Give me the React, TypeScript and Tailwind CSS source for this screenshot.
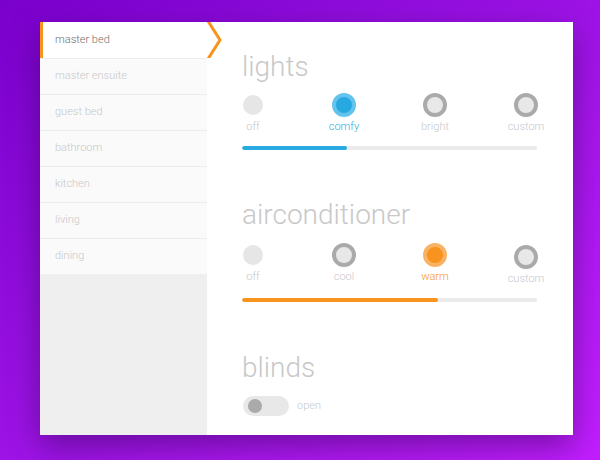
import React from 'react';

const rooms = ['master bed', 'master ensuite', 'guest bed', 'bathroom', 'kitchen', 'living', 'dining'];

type Opt = { label: string; state: 'off' | 'idle' | 'on'; drop?: boolean };

const Dot = ({ state, tone }: { state: Opt['state']; tone: 'blue' | 'orange' }) => {
  if (state === 'off') return <div className="w-5 h-5 rounded-full bg-[#e6e6e6]" />;
  if (state === 'idle')
    return <div className="w-6 h-6 rounded-full border-4 border-[#aaaaaa] bg-[#e8e8e8]" />;
  return (
    <div
      className={
        tone === 'blue'
          ? 'w-6 h-6 rounded-full border-4 border-[#63c3ec] bg-[#27a8e0]'
          : 'w-6 h-6 rounded-full border-4 border-[#f9b264] bg-[#f7931e]'
      }
    />
  );
};

const Section = ({
  title,
  options,
  tone,
  fill,
  gap,
}: {
  title: string;
  options: Opt[];
  tone: 'blue' | 'orange';
  fill: number;
  gap: string;
}) => (
  <div>
    <h2 className="text-[28px] leading-8 font-light text-[#c8c8c8]">{title}</h2>
    <div className={'flex justify-between ' + gap}>
      {options.map((o) => (
        <div key={o.label} className={o.drop ? 'w-[22px] flex flex-col items-center mt-[2px]' : 'w-[22px] flex flex-col items-center'}>
          <div className="h-6 flex items-center justify-center">
            <Dot state={o.state} tone={tone} />
          </div>
          <span
            className={
              o.state === 'on'
                ? tone === 'blue'
                  ? 'mt-[3px] text-[11px] leading-[14px] whitespace-nowrap text-[#29abe2]'
                  : 'mt-[3px] text-[11px] leading-[14px] whitespace-nowrap text-[#f7941d]'
                : 'mt-[3px] text-[11px] leading-[14px] whitespace-nowrap text-[#c8c8c8]'
            }
          >
            {o.label}
          </span>
        </div>
      ))}
    </div>
    <div className="mt-3 h-1 rounded-full bg-[#ebebeb] overflow-hidden">
      <div
        className={tone === 'blue' ? 'h-full rounded-full bg-[#29abe2]' : 'h-full rounded-full bg-[#f7941d]'}
        style={{ width: fill }}
      />
    </div>
  </div>
);

export default function App() {
  return (
    <div
      className="w-[600px] h-[460px] bg-linear-to-br from-[#7a00cc] to-[#c21eff] pt-[22px] pl-10 font-light"
      style={{ fontFamily: 'Roboto, "Liberation Sans", sans-serif' }}
    >
      <div className="w-[533px] h-[413px] bg-white flex shadow-[0_12px_30px_rgba(40,0,70,0.45)]">
        {/* Sidebar */}
        <div className="w-[167px] bg-[#efefef] flex flex-col">
          {rooms.map((r, i) =>
            i === 0 ? (
              <div key={r} className="relative h-9 bg-white border-l-[3px] border-[#f7941d] pl-[12px] flex items-center">
                <span className="text-[11px] text-[#707070]">{r}</span>
                <svg className="absolute -right-[16px] top-0" width="17" height="36" viewBox="0 0 17 36">
                  <path d="M0 0 L14 18 L0 36 Z" fill="#ffffff" />
                  <path d="M2 -1 L14 18 L2 37" fill="none" stroke="#f7941d" strokeWidth="3" />
                </svg>
              </div>
            ) : (
              <div key={r} className="h-9 bg-[#fafafa] border-t border-[#ececec] pl-[15px] flex items-center">
                <span className="text-[11px] text-[#c8c8c8]">{r}</span>
              </div>
            )
          )}
        </div>

        {/* Main */}
        <div className="flex-1 pl-[35px] pr-9 pt-[29px]">
          <Section
            title="lights"
            tone="blue"
            fill={105}
            gap="mt-[10px]"
            options={[
              { label: 'off', state: 'off' },
              { label: 'comfy', state: 'on' },
              { label: 'bright', state: 'idle' },
              { label: 'custom', state: 'idle' },
            ]}
          />
          <div className="mt-[49px]">
            <Section
              title="airconditioner"
              tone="orange"
              fill={196}
              gap="mt-3"
              options={[
                { label: 'off', state: 'off' },
                { label: 'cool', state: 'idle' },
                { label: 'warm', state: 'on' },
                { label: 'custom', state: 'idle', drop: true },
              ]}
            />
          </div>
          <div className="mt-[50px]">
            <h2 className="text-[28px] leading-8 font-light text-[#c8c8c8]">blinds</h2>
            <div className="mt-3 flex items-center gap-2">
              <div className="w-[46px] h-5 ml-px rounded-full bg-[#e8e8e8] flex items-center pl-[5px]">
                <div className="w-[14px] h-[14px] rounded-full bg-[#aaaaaa]" />
              </div>
              <span className="text-[11px] text-[#c8c8c8]">open</span>
            </div>
          </div>
        </div>
      </div>
    </div>
  );
}
